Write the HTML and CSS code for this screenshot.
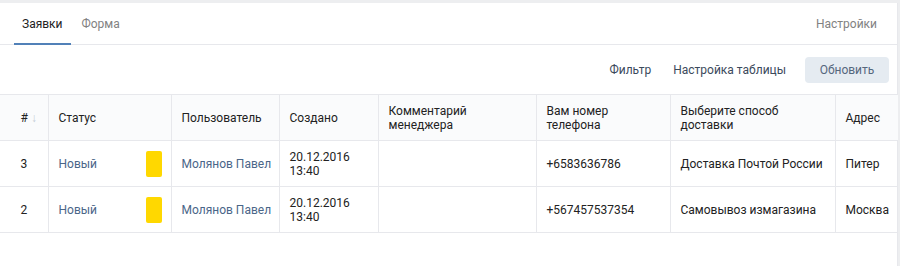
FILE: index.html
```html
<!DOCTYPE html>
<html lang="ru">
<head>
<meta charset="utf-8">
<title>Заявки</title>
<link rel="stylesheet" href="styles.css">
</head>
<body>
<div class="page">
  <div class="card">
    <div class="tabs">
      <a class="tab tab-active">Заявки</a>
      <a class="tab">Форма</a>
      <span class="tabs-spacer"></span>
      <a class="tab-settings">Настройки</a>
    </div>
    <div class="toolbar">
      <a class="tool-link tool-filter">Фильтр</a>
      <a class="tool-link tool-table">Настройка таблицы</a>
      <button class="btn-refresh">Обновить</button>
    </div>
    <table class="grid">
      <colgroup>
        <col class="c-num"><col class="c-status"><col class="c-user"><col class="c-date"><col class="c-comment"><col class="c-phone"><col class="c-delivery"><col class="c-addr">
      </colgroup>
      <thead>
        <tr>
          <th class="num">#<span class="sort">↓</span></th>
          <th>Статус</th>
          <th>Пользователь</th>
          <th>Создано</th>
          <th>Комментарий<br>менеджера</th>
          <th>Вам номер<br>телефона</th>
          <th>Выберите способ<br>доставки</th>
          <th>Адрес</th>
        </tr>
      </thead>
      <tbody>
        <tr>
          <td class="num">3</td>
          <td><div class="status"><span class="status-text">Новый</span><span class="badge"></span></div></td>
          <td class="user">Молянов Павел</td>
          <td>20.12.2016<br>13:40</td>
          <td></td>
          <td>+6583636786</td>
          <td>Доставка Почтой России</td>
          <td>Питер</td>
        </tr>
        <tr>
          <td class="num">2</td>
          <td><div class="status"><span class="status-text">Новый</span><span class="badge"></span></div></td>
          <td class="user">Молянов Павел</td>
          <td>20.12.2016<br>13:40</td>
          <td></td>
          <td>+567457537354</td>
          <td>Самовывоз измагазина</td>
          <td>Москва</td>
        </tr>
      </tbody>
    </table>
  </div>
</div>
</body>
</html>
```
FILE: styles.css
```css
html, body {
  margin: 0;
  padding: 0;
}
body {
  background: #edeef0;
  font-family: Roboto, "Noto Sans", Arial, sans-serif;
  font-size: 12px;
  color: #222;
}
.page {
  padding-top: 3px;
  height: 266px;
  box-sizing: border-box;
}
.card {
  background: #fff;
  width: 897px;
  height: 263px;
  border-right: 1px solid #e7e8ec;
}
.tabs {
  display: flex;
  align-items: stretch;
  height: 41px;
  border-bottom: 1px solid #e7e8ec;
  padding: 0 20px 0 14px;
}
.tab {
  display: flex;
  align-items: center;
  padding: 1px 8px 0;
  margin-right: 3px;
  color: #828282;
  border-bottom: 2px solid transparent;
  margin-bottom: -1px;
  cursor: pointer;
}
.tab-active {
  color: #222;
  border-bottom-color: #5181b8;
}
.tabs-spacer {
  flex: 1;
}
.tab-settings {
  display: flex;
  align-items: center;
  padding-top: 1px;
  color: #828282;
}
.toolbar {
  display: flex;
  justify-content: flex-end;
  align-items: center;
  height: 49px;
  padding-right: 8px;
}
.tool-link {
  color: #3b4a5c;
  cursor: pointer;
}
.tool-filter {
  margin-right: 22px;
}
.tool-table {
  margin-right: 19px;
}
.btn-refresh {
  width: 84px;
  height: 26px;
  border: 0;
  border-radius: 4px;
  background: #e5ebf1;
  color: #55677d;
  font-family: inherit;
  font-size: 12px;
  padding: 0;
}
.grid {
  border-collapse: collapse;
  table-layout: fixed;
  width: 898px;
  border-top: 1px solid #e7e8ec;
}
.c-num { width: 48px; }
.c-status { width: 123px; }
.c-user { width: 108px; }
.c-date { width: 99px; }
.c-comment { width: 158px; }
.c-phone { width: 134px; }
.c-delivery { width: 165px; }
.c-addr { width: 63px; }
.grid th,
.grid td {
  height: 45px;
  padding: 0 9px 0 10px;
  border: 1px solid #e7e8ec;
  vertical-align: middle;
  text-align: left;
  line-height: 14px;
  font-weight: normal;
  white-space: nowrap;
}
.grid th {
  background: #fafbfc;
  color: #222;
}
.grid th:first-child,
.grid td:first-child {
  border-left: 0;
}
.grid th:last-child,
.grid td:last-child {
  border-right: 0;
}
.grid .num {
  text-align: center;
  padding: 0;
}
.grid th.num {
  padding-left: 10px;
}
.sort {
  color: #c5cdd6;
  margin-left: 3px;
  font-size: 12px;
}
.status {
  display: flex;
  justify-content: space-between;
  align-items: center;
}
.status-text {
  color: #4a6688;
}
.badge {
  width: 16px;
  height: 26px;
  border-radius: 2px;
  background: #ffd800;
}
.user {
  color: #4a6688;
}
```
